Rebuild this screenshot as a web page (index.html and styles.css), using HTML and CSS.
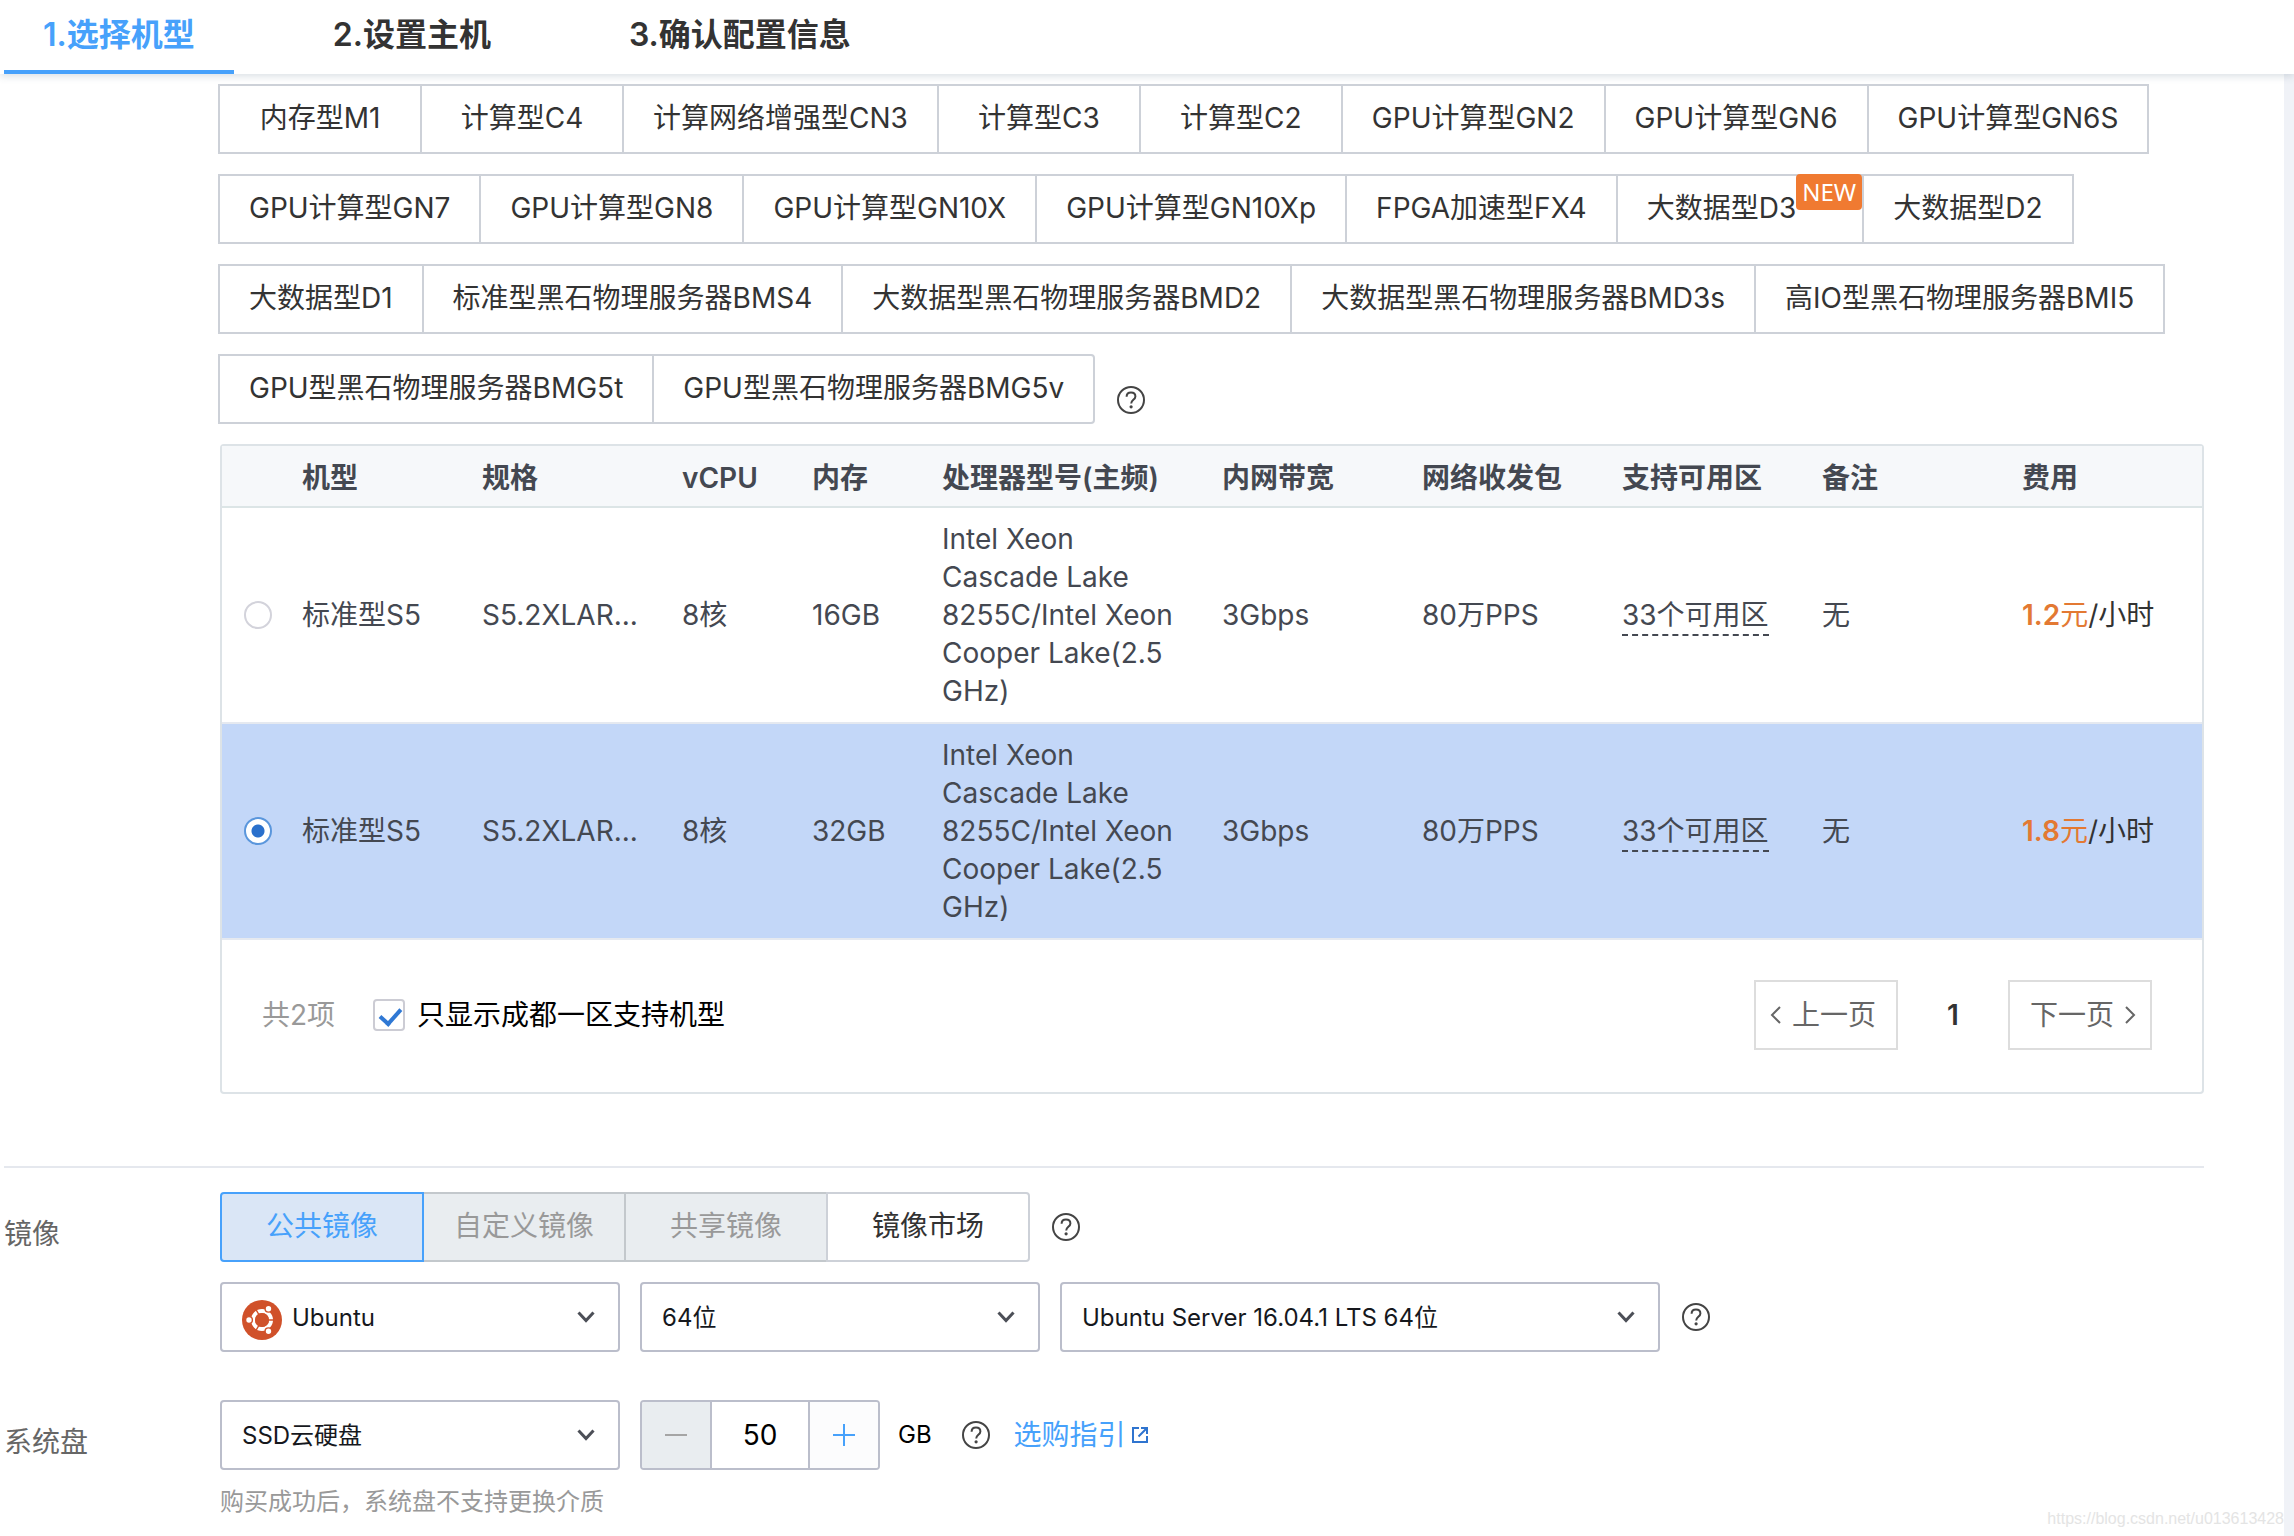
FILE: index.html
```html
<!DOCTYPE html>
<html lang="zh-CN">
<head>
  <meta charset="UTF-8">
  <meta name="viewport" content="width=device-width, initial-scale=1">
  <title>选择机型</title>
  <link rel="stylesheet" href="styles.css">
</head>
<body>
  <svg class="sprite" aria-hidden="true">
    <symbol id="icon-help" viewBox="0 0 28 28">
      <circle cx="14" cy="14" r="13" fill="none" stroke="currentColor" stroke-width="2"/>
      <path d="M9.6 10.8c0-2.6 1.8-4.4 4.4-4.4s4.4 1.7 4.4 4c0 3.2-4.2 3.6-4.2 7" fill="none" stroke="currentColor" stroke-width="2"/>
      <circle cx="14.1" cy="20.8" r="1.6" fill="currentColor"/>
    </symbol>
    <symbol id="icon-chevron" viewBox="0 0 18 12">
      <path d="M1.5 1.5 9 9.5l7.5-8" fill="none" stroke="currentColor" stroke-width="3"/>
    </symbol>
  </svg>

  <header class="steps">
    <button type="button" class="step active">1.选择机型</button>
    <button type="button" class="step">2.设置主机</button>
    <button type="button" class="step">3.确认配置信息</button>
  </header>

  <main class="page">
    <section class="row">
      <div class="label"></div>
      <div class="content">
        <div class="models">
          <button type="button" class="option">内存型M1</button>
          <button type="button" class="option">计算型C4</button>
          <button type="button" class="option">计算网络增强型CN3</button>
          <button type="button" class="option">计算型C3</button>
          <button type="button" class="option">计算型C2</button>
          <button type="button" class="option">GPU计算型GN2</button>
          <button type="button" class="option">GPU计算型GN6</button>
          <button type="button" class="option">GPU计算型GN6S</button>
          <button type="button" class="option">GPU计算型GN7</button>
          <button type="button" class="option">GPU计算型GN8</button>
          <button type="button" class="option">GPU计算型GN10X</button>
          <button type="button" class="option">GPU计算型GN10Xp</button>
          <button type="button" class="option">FPGA加速型FX4</button>
          <button type="button" class="option has-badge">大数据型D3<span class="badge">NEW</span></button>
          <button type="button" class="option">大数据型D2</button>
          <button type="button" class="option">大数据型D1</button>
          <button type="button" class="option">标准型黑石物理服务器BMS4</button>
          <button type="button" class="option">大数据型黑石物理服务器BMD2</button>
          <button type="button" class="option">大数据型黑石物理服务器BMD3s</button>
          <button type="button" class="option">高IO型黑石物理服务器BMI5</button>
          <button type="button" class="option">GPU型黑石物理服务器BMG5t</button>
          <button type="button" class="option last">GPU型黑石物理服务器BMG5v</button>
          <svg class="help models-help"><use href="#icon-help"/></svg>
        </div>

        <div class="panel">
          <table class="specs">
            <colgroup>
              <col class="col-radio">
              <col class="col-model">
              <col class="col-wide">
              <col class="col-narrow">
              <col class="col-narrow">
              <col class="col-cpu">
              <col class="col-wide">
              <col class="col-wide">
              <col class="col-wide">
              <col class="col-wide">
              <col class="col-wide">
            </colgroup>
            <thead>
              <tr>
                <th></th>
                <th>机型</th>
                <th>规格</th>
                <th>vCPU</th>
                <th>内存</th>
                <th>处理器型号(主频)</th>
                <th>内网带宽</th>
                <th>网络收发包</th>
                <th>支持可用区</th>
                <th>备注</th>
                <th>费用</th>
              </tr>
            </thead>
            <tbody>
              <tr>
                <td class="pick"><input type="radio" name="spec" id="spec1" class="radio"></td>
                <td><label for="spec1">标准型S5</label></td>
                <td>S5.2XLAR...</td>
                <td>8核</td>
                <td>16GB</td>
                <td>Intel Xeon Cascade Lake 8255C/Intel Xeon Cooper Lake(2.5 GHz)</td>
                <td>3Gbps</td>
                <td>80万PPS</td>
                <td><span class="zones">33个可用区</span></td>
                <td>无</td>
                <td class="fee"><span class="price"><b>1.2</b>元</span>/小时</td>
              </tr>
              <tr class="selected">
                <td class="pick"><input type="radio" name="spec" id="spec2" class="radio" checked></td>
                <td><label for="spec2">标准型S5</label></td>
                <td>S5.2XLAR...</td>
                <td>8核</td>
                <td>32GB</td>
                <td>Intel Xeon Cascade Lake 8255C/Intel Xeon Cooper Lake(2.5 GHz)</td>
                <td>3Gbps</td>
                <td>80万PPS</td>
                <td><span class="zones">33个可用区</span></td>
                <td>无</td>
                <td class="fee"><span class="price"><b>1.8</b>元</span>/小时</td>
              </tr>
            </tbody>
          </table>

          <div class="panel-foot">
            <span class="total">共2项</span>
            <label class="only-zone">
              <input type="checkbox" class="check" checked>
              <span>只显示成都一区支持机型</span>
            </label>
            <div class="pager">
              <button type="button" class="pager-btn prev">
                <svg class="arrow" viewBox="0 0 12 18"><path d="M10 1 2 9l8 8" fill="none" stroke="currentColor" stroke-width="2"/></svg>
                上一页
              </button>
              <span class="pager-num">1</span>
              <button type="button" class="pager-btn next">
                下一页
                <svg class="arrow" viewBox="0 0 12 18"><path d="m2 1 8 8-8 8" fill="none" stroke="currentColor" stroke-width="2"/></svg>
              </button>
            </div>
          </div>
        </div>
      </div>
    </section>

    <section class="row image-row">
      <div class="label">镜像</div>
      <div class="content">
        <div class="line">
          <div class="segment">
            <button type="button" class="option active">公共镜像</button>
            <button type="button" class="option" disabled>自定义镜像</button>
            <button type="button" class="option" disabled>共享镜像</button>
            <button type="button" class="option">镜像市场</button>
          </div>
          <svg class="help"><use href="#icon-help"/></svg>
        </div>
        <div class="line">
          <div class="select with-logo">
            <svg class="logo" viewBox="0 0 40 40">
              <circle cx="20" cy="20" r="20" fill="#d0512a"/>
              <circle cx="20" cy="20" r="9" fill="none" stroke="#fff" stroke-width="4"/>
              <g stroke="#d0512a" stroke-width="1.4">
                <path d="M20 20h14M20 20l-7-12.1M20 20l-7 12.1"/>
              </g>
              <circle cx="20" cy="20" r="7" fill="#d0512a"/>
              <g fill="#fff" stroke="#d0512a" stroke-width="1.4">
                <circle cx="7" cy="20" r="3.4"/>
                <circle cx="26.5" cy="8.7" r="3.4"/>
                <circle cx="26.5" cy="31.3" r="3.4"/>
              </g>
            </svg>
            <select aria-label="操作系统">
              <option>Ubuntu</option>
            </select>
            <svg class="chevron"><use href="#icon-chevron"/></svg>
          </div>
          <div class="select">
            <select aria-label="位数">
              <option>64位</option>
            </select>
            <svg class="chevron"><use href="#icon-chevron"/></svg>
          </div>
          <div class="select select-wide">
            <select aria-label="系统版本">
              <option>Ubuntu Server 16.04.1 LTS 64位</option>
            </select>
            <svg class="chevron"><use href="#icon-chevron"/></svg>
          </div>
          <svg class="help"><use href="#icon-help"/></svg>
        </div>
      </div>
    </section>

    <section class="row disk-row">
      <label class="label" for="disk">系统盘</label>
      <div class="content">
        <div class="line">
          <div class="select">
            <select id="disk">
              <option>SSD云硬盘</option>
            </select>
            <svg class="chevron"><use href="#icon-chevron"/></svg>
          </div>
          <div class="stepper">
            <button type="button" class="minus" aria-label="减少" disabled>
              <svg viewBox="0 0 22 22"><path d="M0 11h22" stroke="currentColor" stroke-width="2"/></svg>
            </button>
            <input type="text" value="50" aria-label="容量">
            <button type="button" class="plus" aria-label="增加">
              <svg viewBox="0 0 22 22"><path d="M0 11h22M11 0v22" stroke="currentColor" stroke-width="2"/></svg>
            </button>
          </div>
          <span class="unit">GB</span>
          <svg class="help disk-help"><use href="#icon-help"/></svg>
          <a class="guide" href="#">选购指引<svg viewBox="0 0 16 16"><path d="M7 1H1v14h14V9M9 1h6v6M15 1 6.5 9.5" fill="none" stroke="#2f74cf" stroke-width="2"/></svg></a>
        </div>
        <p class="hint">购买成功后，系统盘不支持更换介质</p>
      </div>
    </section>

    <div class="watermark">https://blog.csdn.net/u013613428</div>
  </main>
</body>
</html>
```

FILE: styles.css
```css
* {
  box-sizing: border-box;
}

body {
  margin: 0;
  min-height: 100vh;
  display: flex;
  flex-direction: column;
  background: #f0f2f7;
  color: #333;
  font-family: Inter, "Noto Sans CJK SC", sans-serif;
  font-size: 28px;
  line-height: 38px;
}

button, select, input {
  font-family: inherit;
  font-size: inherit;
  line-height: inherit;
  color: inherit;
}

button {
  cursor: pointer;
}

.sprite {
  position: absolute;
  width: 0;
  height: 0;
}

/* steps */
.steps {
  position: relative;
  z-index: 1;
  display: flex;
  gap: 60px;
  height: 74px;
  padding-left: 4px;
  background: #fff;
  box-shadow: 0 2px 8px rgba(60, 90, 110, 0.2);
}

.step {
  padding: 0 39px;
  border: 0;
  border-bottom: 4px solid transparent;
  background: none;
  font-size: 32px;
  font-weight: 600;
}

.step.active {
  color: #47a1fb;
  border-bottom-color: #47a1fb;
}

.page {
  position: relative;
  flex: 1;
  margin-right: 10px;
  padding: 10px 80px 20px 4px;
  background: #fff;
}

.row {
  display: grid;
  grid-template-columns: 216px minmax(0, 1fr);
}

.label {
  padding-top: 23px;
  color: #666;
}

.line {
  display: flex;
  align-items: center;
}

.help {
  flex: none;
  width: 28px;
  height: 28px;
  margin-left: 22px;
  color: #444;
}

/* option buttons */
.models {
  display: flex;
  flex-wrap: wrap;
  row-gap: 20px;
  margin-bottom: 20px;
}

.option {
  position: relative;
  min-width: 204px;
  height: 70px;
  padding: 0 29px 2px;
  margin-left: -2px;
  border: 2px solid #cdd1d8;
  background: #fff;
  white-space: nowrap;
}

.option.has-badge {
  padding-right: 66px;
}

.option.last {
  border-radius: 0 4px 4px 0;
}

.badge {
  position: absolute;
  top: -2px;
  right: 0;
  width: 66px;
  height: 36px;
  border-radius: 4px;
  background: #f07a31;
  color: #fff;
  font-family: "Noto Sans", sans-serif;
  font-size: 24px;
  line-height: 36px;
  text-align: center;
}

.models-help {
  align-self: flex-end;
  margin-bottom: 10px;
}

/* table */
.panel {
  border: 2px solid #dde3e7;
  border-radius: 4px;
}

.specs {
  width: 100%;
  table-layout: fixed;
  border-collapse: separate;
  border-spacing: 0;
  color: #444851;
}

.col-radio { width: 60px; }
.col-model { width: 180px; }
.col-wide { width: 200px; }
.col-narrow { width: 130px; }
.col-cpu { width: 280px; }

.specs th {
  height: 62px;
  padding: 4px 20px 0;
  border-bottom: 2px solid #dce5e6;
  background: #f6f8fa;
  font-weight: 600;
  text-align: left;
  white-space: nowrap;
}

.specs td {
  padding: 12px 20px;
  border-bottom: 2px solid #e5e9f0;
}

.specs .pick {
  padding: 0 0 0 22px;
}

.specs .fee {
  padding-right: 0;
  color: #333;
}

.selected td {
  background: #c3d7f8;
}

.radio {
  appearance: none;
  display: block;
  width: 28px;
  height: 28px;
  margin: 0;
  border: 2px solid #d3d3db;
  border-radius: 50%;
  background: #fff;
}

.radio:checked {
  border-color: #5a96dc;
  background: radial-gradient(circle, #2a70cc 6px, #fff 7px);
}

.zones {
  padding-bottom: 2px;
  border-bottom: 2px dashed #444851;
}

.price {
  color: #e37933;
}

.price b {
  font-weight: 600;
}

.panel-foot {
  display: flex;
  align-items: center;
  padding: 40px 50px 42px 40px;
}

.total {
  color: #999;
}

.only-zone {
  display: flex;
  align-items: center;
  gap: 12px;
  margin-left: 38px;
  color: #000;
}

.check {
  appearance: none;
  position: relative;
  width: 32px;
  height: 32px;
  margin: 0;
  border: 2px solid #ccccd4;
  border-radius: 4px;
  background: #fff;
}

.check:checked::after {
  content: "";
  position: absolute;
  left: 9px;
  top: 3px;
  width: 9px;
  height: 17px;
  border: solid #2f78d4;
  border-width: 0 4px 4px 0;
  transform: rotate(42deg);
}

.pager {
  display: flex;
  align-items: center;
  margin-left: auto;
}

.pager-btn {
  display: flex;
  align-items: center;
  gap: 10px;
  width: 144px;
  height: 70px;
  border: 2px solid #ddd;
  background: #fff;
  color: #666;
}

.pager-btn.prev {
  padding: 0 20px 0 14px;
}

.pager-btn.next {
  padding: 0 14px 0 20px;
}

.arrow {
  flex: none;
  width: 12px;
  height: 18px;
}

.pager-num {
  width: 110px;
  font-weight: 600;
  text-align: center;
}

/* image */
.image-row {
  margin-top: 72px;
  padding-top: 24px;
  border-top: 2px solid #e5e8ee;
}

.image-row .line + .line {
  margin-top: 20px;
}

.segment {
  display: flex;
  padding-left: 2px;
}

.segment .option:first-child {
  border-radius: 4px 0 0 4px;
}

.segment .option:last-child {
  border-radius: 0 4px 4px 0;
}

.segment .option.active {
  z-index: 1;
  border-color: #47a1fb;
  background: #dae6f6;
  color: #47a1fb;
}

.segment .option:disabled {
  border-color: #c3c8cc;
  background: #e9edf0;
  color: #999;
}

.select {
  position: relative;
  width: 400px;
  margin-right: 20px;
}

.select-wide {
  width: 600px;
  margin-right: 0;
}

.select select {
  appearance: none;
  display: block;
  width: 100%;
  height: 70px;
  padding: 2px 60px 0 20px;
  border: 2px solid #bbbecb;
  border-radius: 4px;
  background: #fff;
  color: #16181d;
  font-size: 24px;
}

.select.with-logo select {
  padding-left: 70px;
}

.logo {
  position: absolute;
  left: 22px;
  top: 18px;
  width: 40px;
  height: 40px;
}

.chevron {
  position: absolute;
  right: 25px;
  top: 29px;
  width: 18px;
  height: 12px;
  color: #4c4f57;
  pointer-events: none;
}

/* disk */
.disk-row {
  margin-top: 48px;
}

.stepper {
  display: flex;
  width: 240px;
  height: 70px;
  border: 2px solid #bbbecb;
  border-radius: 4px;
  overflow: hidden;
}

.stepper button {
  display: flex;
  align-items: center;
  justify-content: center;
  flex: 1;
  padding: 0;
  border: 0;
}

.stepper svg {
  width: 22px;
  height: 22px;
}

.stepper input {
  width: 100px;
  padding: 0;
  border: solid #bbbecb;
  border-width: 0 2px;
  color: #000;
  text-align: center;
}

.stepper .minus {
  background: #e9edf0;
  color: #a5a5a5;
}

.stepper .plus {
  background: #fcfcfd;
  color: #47a1fb;
}

.unit {
  margin-left: 18px;
  color: #000;
  font-size: 24px;
}

.disk-help {
  margin-left: 30px;
}

.guide {
  display: flex;
  align-items: center;
  gap: 6px;
  margin-left: 24px;
  color: #47a1fb;
  text-decoration: none;
}

.guide svg {
  width: 16px;
  height: 16px;
}

.hint {
  margin: 17px 0 0;
  color: #999;
  font-size: 24px;
  line-height: 30px;
}

.watermark {
  position: absolute;
  right: 0;
  bottom: 8px;
  color: #e4e4e4;
  font-family: "Liberation Sans", sans-serif;
  font-size: 16px;
  line-height: 20px;
}
```
